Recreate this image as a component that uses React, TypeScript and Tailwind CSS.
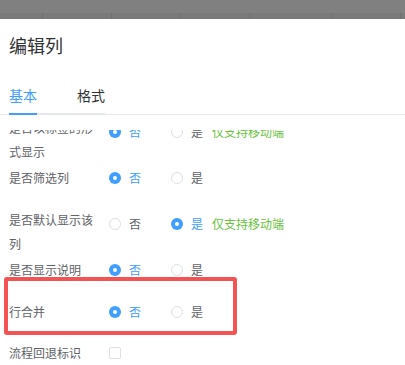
import React from 'react';

type Opt = { text: string; extra?: string };

function Radio({ checked, text, extra, last }: { checked: boolean; text: string; extra?: string; last?: boolean }) {
  return (
    <label className={last ? 'inline-flex items-center' : 'inline-flex items-center mr-[30px]'}>
      {checked ? (
        <span className="w-[12px] h-[12px] rounded-full bg-[#409eff] flex items-center justify-center">
          <span className="w-[4px] h-[4px] rounded-full bg-white" />
        </span>
      ) : (
        <span className="w-[12px] h-[12px] rounded-full border border-[#dcdfe6] bg-white" />
      )}
      <span className={checked ? 'ml-[8px] text-[#409eff]' : 'ml-[8px] text-[#606266]'}>{text}</span>
      {extra && <span className="ml-[9px] text-[#67c23a]">{extra}</span>}
    </label>
  );
}

function Row({
  label,
  rowClass,
  double,
  value,
  options,
  checkbox,
}: {
  label: string;
  rowClass: string;
  double?: boolean;
  value?: number;
  options?: Opt[];
  checkbox?: boolean;
}) {
  return (
    <div className={'flex items-start ' + rowClass}>
      <div className="w-[86px] leading-[24px] text-[#606266]">{label}</div>
      <div className={double ? 'ml-[14px] mt-[4px] h-[24px] flex items-center' : 'ml-[14px] h-[24px] flex items-center'}>
        {checkbox ? (
          <span className="w-[12px] h-[12px] rounded-[2px] border border-[#dcdfe6] bg-white" />
        ) : (
          options?.map((o, i) => (
            <Radio key={i} checked={value === i} text={o.text} extra={o.extra} last={i === options.length - 1} />
          ))
        )}
      </div>
    </div>
  );
}

export default function App() {
  const seps = [43, 69, 69, 69, 82, 69];
  return (
    <div className="relative w-[405px] h-[365px] overflow-hidden bg-white text-[12px] font-['Noto_Sans_CJK_SC','Microsoft_YaHei',sans-serif]">
      {/* mask over the table behind */}
      <div className="h-[13px] bg-[#808080]" />
      <div className="h-[6px] bg-[#7a7a7a] flex">
        {seps.map((w, i) => (
          <div key={i} className="h-full border-r border-[#707070]" style={{ width: w }} />
        ))}
      </div>

      <div className="px-[9px] pt-[14px]">
        <div className="text-[18px] leading-[25px] text-[#303133]">编辑列</div>
      </div>

      <div className="mt-[17px] pl-[9px] flex border-b border-[#e4e7ed]">
        <div className="flex -mb-px text-[14px]">
          <div className="flex flex-col">
            <span className="h-[38px] leading-[40px] text-[#409eff]">基本</span>
            <div className="h-[2px] bg-[#409eff]" />
          </div>
          <div className="w-[40px] flex flex-col justify-end">
            <div className="h-[2px] bg-[#e4e7ed]" />
          </div>
          <div className="flex flex-col">
            <span className="h-[38px] leading-[40px] text-[#303133]">格式</span>
            <div className="h-[2px] bg-[#e4e7ed]" />
          </div>
        </div>
      </div>

      <div className="mt-[15px] h-[235px] overflow-hidden pl-[9px]">
        <div className="-mt-[14px]">
          <Row
            label="是否以标签的形式显示"
            rowClass="h-[50px]"
            double
            value={0}
            options={[{ text: '否' }, { text: '是', extra: '仅支持移动端' }]}
          />
          <Row label="是否筛选列" rowClass="h-[42px]" value={0} options={[{ text: '否' }, { text: '是' }]} />
          <Row
            label="是否默认显示该列"
            rowClass="h-[50px]"
            double
            value={1}
            options={[{ text: '否' }, { text: '是', extra: '仅支持移动端' }]}
          />
          <Row label="是否显示说明" rowClass="h-[42px]" value={0} options={[{ text: '否' }, { text: '是' }]} />
          <Row label="行合并" rowClass="h-[41px]" value={0} options={[{ text: '否' }, { text: '是' }]} />
          <Row label="流程回退标识" rowClass="h-[41px]" checkbox />
        </div>
      </div>

      {/* red annotation box */}
      <div className="absolute left-[4px] top-[277px] w-[233px] h-[58px] border-4 border-[#f45353] rounded-[3px]" />
    </div>
  );
}
